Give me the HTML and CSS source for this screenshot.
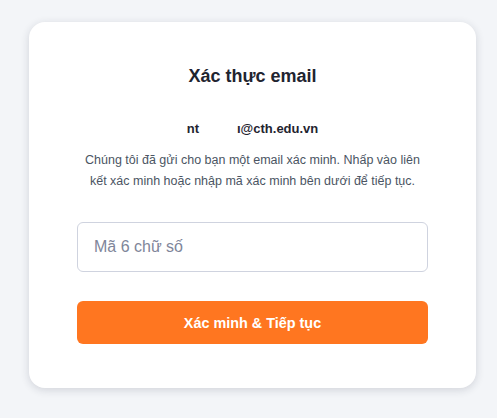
FILE: index.html
```html
<!DOCTYPE html>
<html lang="vi">
<head>
<meta charset="utf-8">
<title>Xác thực email</title>
<link rel="stylesheet" href="styles.css">
</head>
<body>
<main class="page">
  <section class="card">
    <h1 class="title">Xác thực email</h1>
    <p class="email">nt<span class="redact"></span>ı@cth.edu.vn</p>
    <p class="desc">Chúng tôi đã gửi cho bạn một email xác minh. Nhấp vào liên kết xác minh hoặc nhập mã xác minh bên dưới để tiếp tục.</p>
    <form class="form">
      <input class="code" type="text" placeholder="Mã 6 chữ số">
      <button class="btn" type="button">Xác minh &amp; Tiếp tục</button>
    </form>
  </section>
</main>
</body>
</html>
```

FILE: styles.css
```css
html, body {
  margin: 0;
  padding: 0;
  background: #f3f5f8;
  font-family: "Liberation Sans", Arial, sans-serif;
}
.page {
  padding: 22px 21px 31px 29px;
}
.card {
  background: #fff;
  border-radius: 16px;
  box-shadow: 0 2px 8px rgba(30, 40, 60, 0.16);
  padding: 43px 48px 44px;
  text-align: center;
}
.title {
  margin: 0;
  font-size: 18px;
  line-height: 22px;
  font-weight: 700;
  color: #1f2430;
}
.email {
  margin: 33px 0 0;
  font-size: 13px;
  line-height: 18px;
  font-weight: 700;
  color: #1f2430;
}
.redact {
  display: inline-block;
  width: 38px;
}
.desc {
  margin: 12px 0 0;
  font-size: 12.5px;
  line-height: 21px;
  color: #4b5563;
}
.form {
  margin-top: 30px;
  display: flex;
  flex-direction: column;
  gap: 29px;
}
.code {
  box-sizing: border-box;
  height: 50px;
  width: 100%;
  border: 1px solid #cfd3df;
  border-radius: 6px;
  padding: 0 16px;
  font-family: inherit;
  font-size: 16px;
  color: #1f2430;
  outline: none;
}
.code::placeholder {
  color: #80869a;
}
.btn {
  height: 43px;
  width: 100%;
  border: none;
  border-radius: 6px;
  background: #ff7620;
  color: #fff;
  font-family: inherit;
  font-size: 14.4px;
  font-weight: 700;
  cursor: pointer;
}
```
